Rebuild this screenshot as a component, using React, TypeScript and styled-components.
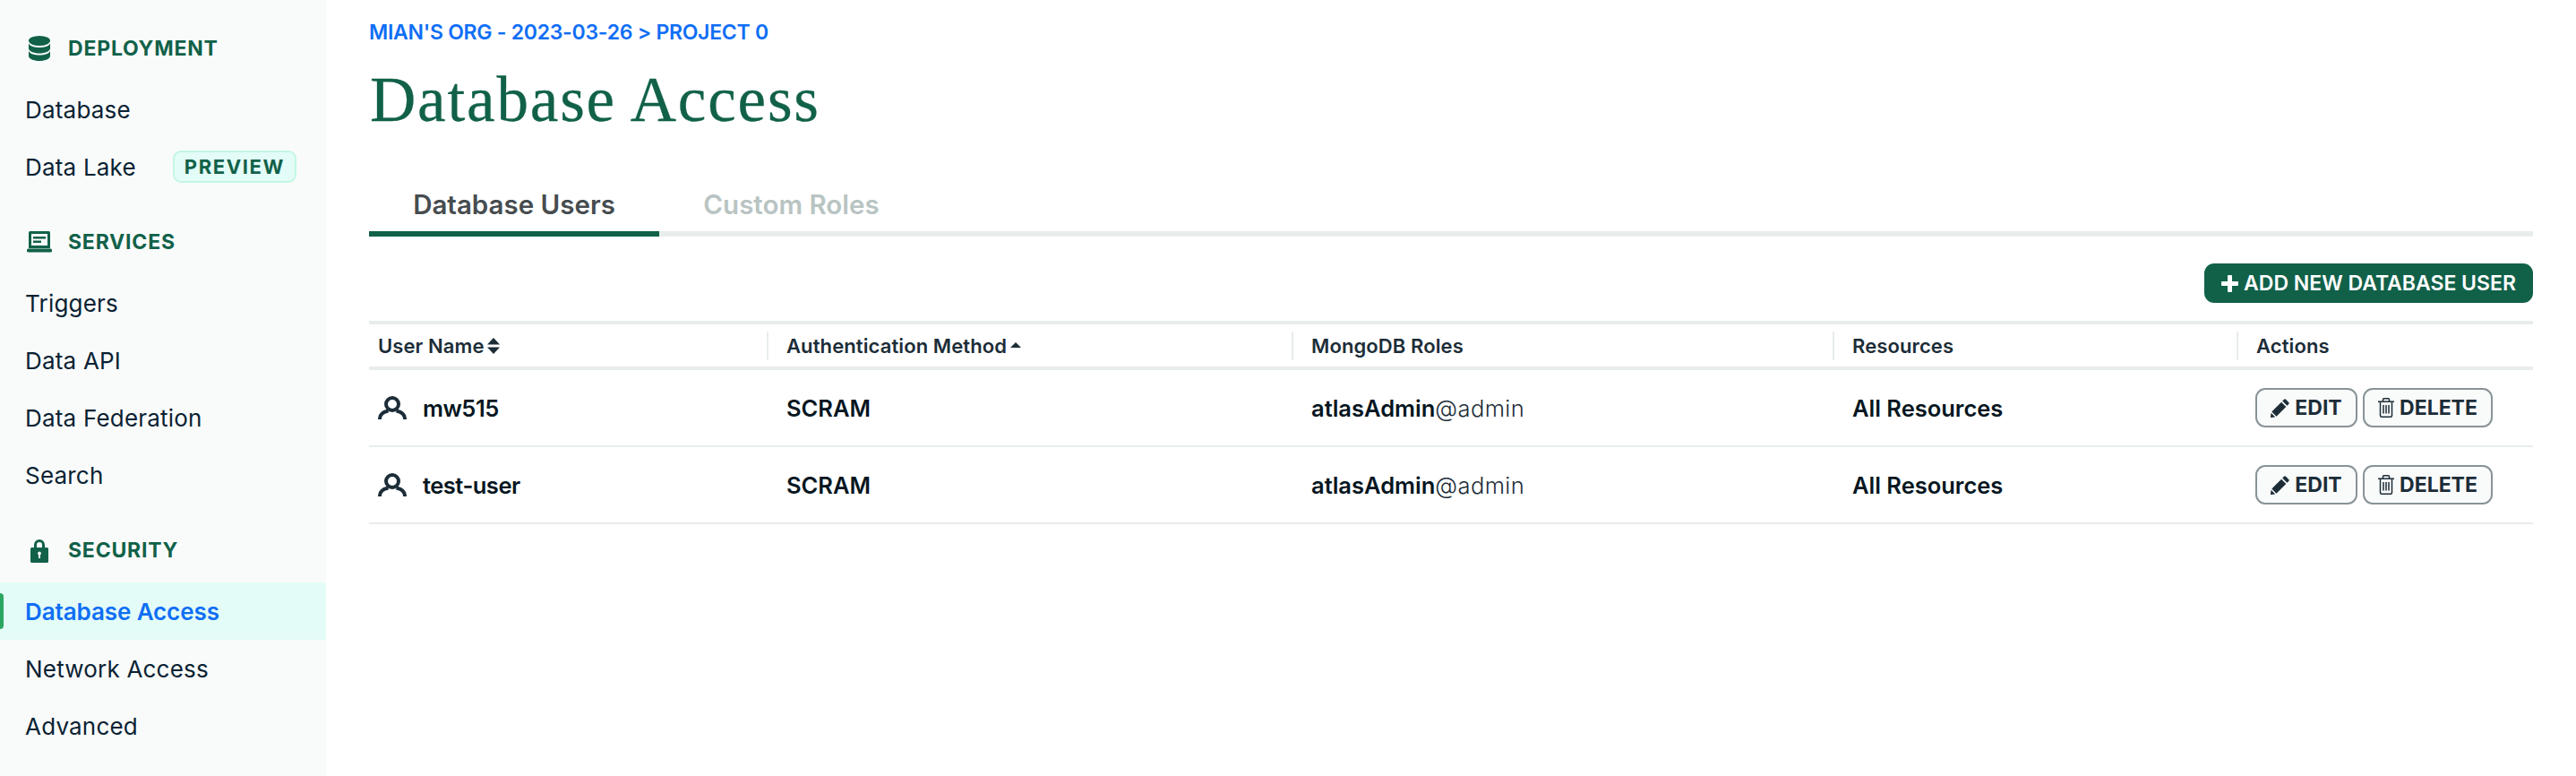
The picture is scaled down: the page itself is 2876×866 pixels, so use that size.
import React from 'react';
import styled, { createGlobalStyle } from 'styled-components';

const GlobalStyle = createGlobalStyle`
    html, body {
        margin: 0;
        padding: 0;
        background: #fff;
    }
    body {
        font-family: Inter, "Liberation Sans", sans-serif;
    }
`;

const Page = styled.div`
    display: flex;
    width: 2876px;
    height: 866px;
    overflow: hidden;
`;

const Sidebar = styled.nav`
    width: 364px;
    flex-shrink: 0;
    padding-top: 22px;
    background-color: #f9fbfa;
    box-sizing: border-box;
`;

const Section = styled.div`
    margin-bottom: 20px;
`;

const SectionHeader = styled.div`
    display: flex;
    align-items: center;
    height: 64px;
    margin-bottom: 4px;
    padding-left: 30px;
    color: #116149;
`;

const SectionIcon = styled.span`
    display: flex;
    justify-content: center;
    width: 28px;
    margin-right: 18px;
`;

const SectionTitle = styled.span`
    font-size: 23px;
    font-weight: 700;
    letter-spacing: 0.8px;
`;

const NavItem = styled.div<{ $active?: boolean }>`
    position: relative;
    display: flex;
    align-items: center;
    height: 64px;
    padding-left: 28px;
    font-size: 26px;
    letter-spacing: ${props => (props.$active ? '-0.1px' : '0.2px')};
    font-weight: ${props => (props.$active ? 600 : 400)};
    color: ${props => (props.$active ? '#0f6ef5' : '#0a2233')};
    background-color: ${props => (props.$active ? '#e3fcf7' : 'transparent')};
`;

const ActiveMark = styled.span`
    position: absolute;
    left: 0;
    top: 12px;
    width: 4px;
    height: 40px;
    background-color: #2aa660;
    border-radius: 0 4px 4px 0;
`;

const PreviewBadge = styled.span`
    display: flex;
    align-items: center;
    justify-content: center;
    box-sizing: border-box;
    width: 138px;
    height: 36px;
    margin-left: 41px;
    font-size: 22px;
    font-weight: 700;
    letter-spacing: 1.6px;
    color: #116149;
    background-color: #e3fcf7;
    border: 2px solid #c3f7e3;
    border-radius: 9px;
`;

const Main = styled.main`
    flex: 1;
    padding: 21px 48px 0;
    min-width: 0;
`;

const Breadcrumb = styled.div`
    height: 30px;
    line-height: 30px;
    font-size: 23px;
    letter-spacing: -0.27px;
    font-weight: 600;
    color: #0f6ef5;
`;

const Title = styled.h1`
    margin: 0;
    height: 128px;
    padding: 19px 0 0 1px;
    line-height: 82px;
    font-family: "Liberation Serif", serif;
    font-size: 71px;
    letter-spacing: 1.85px;
    font-weight: 400;
    color: #116149;
    -webkit-text-stroke: 0.3px #116149;
`;

const TabBar = styled.div`
    display: flex;
    height: 66px;
    box-sizing: border-box;
    border-bottom: 6px solid #e8edeb;
`;

const Tab = styled.div<{ $active?: boolean }>`
    display: flex;
    align-items: center;
    justify-content: center;
    box-sizing: content-box;
    height: 60px;
    width: ${props => (props.$active ? '324px' : '295px')};
    font-size: 29.5px;
    font-weight: 600;
    color: ${props => (props.$active ? '#464c4f' : '#b8c4c2')};
    border-bottom: 6px solid ${props => (props.$active ? '#116149' : 'transparent')};
`;

const Toolbar = styled.div`
    display: flex;
    justify-content: flex-end;
    margin-top: 30px;
`;

const AddButton = styled.button`
    display: flex;
    align-items: center;
    justify-content: center;
    gap: 6px;
    width: 367px;
    height: 44px;
    padding: 0;
    font-family: inherit;
    font-size: 23px;
    font-weight: 600;
    color: #fff;
    background-color: #116149;
    border: none;
    border-radius: 11px;
`;

const TableHead = styled.div`
    display: grid;
    grid-template-columns: 444px 586px 604px 451px 331px;
    align-items: center;
    height: 47px;
    margin-top: 20px;
    border-top: 4px solid #e8edeb;
    border-bottom: 4px solid #e8edeb;
`;

const HeadCell = styled.div<{ $first?: boolean }>`
    display: flex;
    align-items: center;
    gap: 3px;
    height: 32px;
    padding-left: ${props => (props.$first ? '10px' : '20px')};
    font-size: 22px;
    letter-spacing: 0.1px;
    font-weight: 600;
    color: #1c2d38;
    border-left: ${props => (props.$first ? 'none' : '2px solid #e8edeb')};
`;

const Row = styled.div`
    display: grid;
    grid-template-columns: 444px 586px 604px 451px 331px;
    align-items: center;
    height: 84px;
    border-bottom: 2px solid #e8edeb;
`;

const Cell = styled.div<{ $first?: boolean }>`
    display: flex;
    align-items: center;
    padding-left: ${props => (props.$first ? '10px' : '22px')};
    font-size: 25.5px;
    font-weight: 600;
    color: #061621;
`;

const UserName = styled.span`
    letter-spacing: -0.5px;
`;

const UserIcon = styled.span`
    display: flex;
    margin-right: 18px;
`;

const Light = styled.span`
    font-weight: 300;
    letter-spacing: 0.4px;
    color: #1c2d38;
`;

const Actions = styled.div`
    display: flex;
    gap: 6px;
    padding-left: 21px;
`;

const ActionButton = styled.button<{ $width: number }>`
    display: flex;
    align-items: center;
    justify-content: center;
    gap: 6px;
    box-sizing: border-box;
    width: ${props => props.$width}px;
    height: 44px;
    padding: 0;
    font-family: inherit;
    font-size: 23px;
    font-weight: 700;
    color: #1c2d38;
    background-color: #f9fbfa;
    border: 2px solid #889397;
    border-radius: 11px;
`;

const DatabaseIcon = () => (
    <svg width="24" height="28" viewBox="0 0 24 28" fill="#116149">
        <ellipse cx="12" cy="5.5" rx="12" ry="5.5" />
        <path d="M0 8.5C2 12 6.5 13 12 13s10-1 12-4.500V14c0 3-5.400 5.500-12 5.500S0 17 0 14z" />
        <path d="M0 17c2 3.500 6.500 4.500 12 4.500s10-1 12-4.500v5.500c0 3-5.400 5.500-12 5.500S0 25.500 0 22.500z" />
    </svg>
);

const LaptopIcon = () => (
    <svg width="28" height="24" viewBox="0 0 28 24" fill="#116149">
        <path fillRule="evenodd" d="M3.500 0h21A1.500 1.500 0 0 1 26 1.500V19h-24V1.500A1.500 1.500 0 0 1 3.500 0zM5 3v13h18V3z" />
        <rect x="0" y="19.500" width="28" height="4" rx="1.500" />
        <rect x="7" y="6" width="14" height="2.500" />
        <rect x="7" y="10.500" width="9" height="2.500" />
    </svg>
);

const LockIcon = () => (
    <svg width="20" height="28" viewBox="0 0 20 28" fill="#116149">
        <path fillRule="evenodd" d="M4 11V8a6 6 0 0 1 12 0v3h2.500A1.500 1.500 0 0 1 20 12.500v14a1.500 1.500 0 0 1-1.500 1.500h-17A1.500 1.500 0 0 1 0 26.500v-14A1.500 1.500 0 0 1 1.500 11zM7 11h6V8a3 3 0 0 0-6 0zM10 15.500a2 2 0 0 0-1 3.700V23h2v-3.800a2 2 0 0 0-1-3.700z" />
    </svg>
);

const PersonIcon = () => (
    <svg width="32" height="26" viewBox="0 0 32 26" fill="none" stroke="#1c2d38" strokeWidth="4">
        <circle cx="16" cy="9" r="7" />
        <path d="M2 26v-1c0-4 3-7 9.500-8.500" />
        <path d="M30 26v-1c0-4-3-7-9.500-8.500" />
    </svg>
);

const PencilIcon = () => (
    <svg width="21" height="21" viewBox="0 0 21 21" fill="#1c2d38">
        <path d="M15 .8a1.500 1.500 0 0 1 2.100 0l3.100 3.100a1.500 1.500 0 0 1 0 2.100l-1.800 1.800-5.200-5.200z" />
        <path d="M12.100 3.700l5.200 5.200L6.500 19.700 1.300 14.500z" />
        <path d="M.6 15.800l4.600 4.600-4.400 .6a.7.7 0 0 1-.8-.8z" />
    </svg>
);

const TrashIcon = () => (
    <svg width="18" height="22" viewBox="0 0 18 22" fill="none" stroke="#1c2d38" strokeWidth="1.500">
        <path d="M0 4.200h18" />
        <path d="M5.500 4V1.800q0-1 1-1h5q1 0 1 1V4" />
        <path d="M2.500 4.500v15.200q0 1.500 1.500 1.500h10q1.500 0 1.500-1.500V4.500" />
        <path d="M6 8v9.500M9 8v9.500M12 8v9.500" />
    </svg>
);

const PlusIcon = () => (
    <svg width="19" height="19" viewBox="0 0 19 19" fill="#fff">
        <rect x="7" y="0" width="5" height="19" rx="1" />
        <rect x="0" y="7" width="19" height="5" rx="1" />
    </svg>
);

const SortIcon = ({ both }: { both?: boolean }) => (
    <svg width="14" height="18" viewBox="0 0 14 18" fill="#1c2d38">
        <path d={both ? 'M7 0l7 7.500H0z' : 'M7 5l6 6H1z'} />
        {both && <path d="M7 18l7-7.500H0z" />}
    </svg>
);

interface DbUser {
    name: string;
}

const users: DbUser[] = [{ name: 'mw515' }, { name: 'test-user' }];

function App() {
    return (
        <Page>
            <GlobalStyle />
            <Sidebar>
                <Section>
                    <SectionHeader>
                        <SectionIcon><DatabaseIcon /></SectionIcon>
                        <SectionTitle>DEPLOYMENT</SectionTitle>
                    </SectionHeader>
                    <NavItem>Database</NavItem>
                    <NavItem>
                        Data Lake
                        <PreviewBadge>PREVIEW</PreviewBadge>
                    </NavItem>
                </Section>
                <Section>
                    <SectionHeader>
                        <SectionIcon><LaptopIcon /></SectionIcon>
                        <SectionTitle>SERVICES</SectionTitle>
                    </SectionHeader>
                    <NavItem>Triggers</NavItem>
                    <NavItem>Data API</NavItem>
                    <NavItem>Data Federation</NavItem>
                    <NavItem>Search</NavItem>
                </Section>
                <Section>
                    <SectionHeader>
                        <SectionIcon><LockIcon /></SectionIcon>
                        <SectionTitle>SECURITY</SectionTitle>
                    </SectionHeader>
                    <NavItem $active>
                        <ActiveMark />
                        Database Access
                    </NavItem>
                    <NavItem>Network Access</NavItem>
                    <NavItem>Advanced</NavItem>
                </Section>
            </Sidebar>
            <Main>
                <Breadcrumb>MIAN'S ORG - 2023-03-26 &gt; PROJECT 0</Breadcrumb>
                <Title>Database Access</Title>
                <TabBar>
                    <Tab $active>Database Users</Tab>
                    <Tab>Custom Roles</Tab>
                </TabBar>
                <Toolbar>
                    <AddButton><PlusIcon />ADD NEW DATABASE USER</AddButton>
                </Toolbar>
                <TableHead>
                    <HeadCell $first>User Name <SortIcon both /></HeadCell>
                    <HeadCell>Authentication Method <SortIcon /></HeadCell>
                    <HeadCell>MongoDB Roles</HeadCell>
                    <HeadCell>Resources</HeadCell>
                    <HeadCell>Actions</HeadCell>
                </TableHead>
                {users.map(user => (
                    <Row key={user.name}>
                        <Cell $first>
                            <UserIcon><PersonIcon /></UserIcon>
                            <UserName>{user.name}</UserName>
                        </Cell>
                        <Cell>SCRAM</Cell>
                        <Cell>atlasAdmin<Light>@admin</Light></Cell>
                        <Cell>All Resources</Cell>
                        <Actions>
                            <ActionButton $width={114}><PencilIcon />EDIT</ActionButton>
                            <ActionButton $width={145}><TrashIcon />DELETE</ActionButton>
                        </Actions>
                    </Row>
                ))}
            </Main>
        </Page>
    );
}

export default App;
